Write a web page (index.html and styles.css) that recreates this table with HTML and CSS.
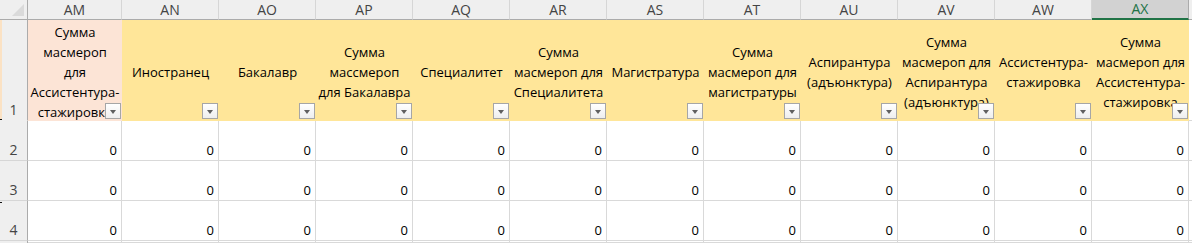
FILE: index.html
```html
<!DOCTYPE html>
<html lang="ru">
<head>
<meta charset="utf-8">
<title>Лист</title>
<link rel="stylesheet" href="styles.css">
</head>
<body>
<div class="sheet">
  <div class="corner"><svg class="corner-tri" width="12" height="12" viewBox="0 0 12 12"><polygon points="0,12 12,12 12,0" fill="#dadada"/></svg></div>
  <div class="ch">AM</div>
  <div class="ch">AN</div>
  <div class="ch">AO</div>
  <div class="ch">AP</div>
  <div class="ch">AQ</div>
  <div class="ch">AR</div>
  <div class="ch">AS</div>
  <div class="ch">AT</div>
  <div class="ch">AU</div>
  <div class="ch">AV</div>
  <div class="ch">AW</div>
  <div class="ch ch-sel">AX</div>
  <div class="ch ch-rest"></div>

  <div class="rh rh1">1</div>
  <div class="hc hc-peach"><span class="hc-text">Сумма<br>масмероп<br>для<br>Ассистентура-<br>стажировка</span><span class="dd"></span></div>
  <div class="hc"><span class="hc-text">Иностранец</span><span class="dd"></span></div>
  <div class="hc"><span class="hc-text">Бакалавр</span><span class="dd"></span></div>
  <div class="hc"><span class="hc-text">Сумма<br>массмероп<br>для Бакалавра</span><span class="dd"></span></div>
  <div class="hc"><span class="hc-text">Специалитет</span><span class="dd"></span></div>
  <div class="hc"><span class="hc-text">Сумма<br>масмероп для<br>Специалитета</span><span class="dd"></span></div>
  <div class="hc"><span class="hc-text">Магистратура</span><span class="dd"></span></div>
  <div class="hc"><span class="hc-text">Сумма<br>масмероп для<br>магистратуры</span><span class="dd"></span></div>
  <div class="hc"><span class="hc-text">Аспирантура<br>(адъюнктура)</span><span class="dd"></span></div>
  <div class="hc"><span class="hc-text">Сумма<br>масмероп для<br>Аспирантура<br>(адъюнктура)</span><span class="dd"></span></div>
  <div class="hc"><span class="hc-text">Ассистентура-<br>стажировка</span><span class="dd"></span></div>
  <div class="hc"><span class="hc-text">Сумма<br>масмероп для<br>Ассистентура-<br>стажировка</span><span class="dd"></span></div>
  <div class="dc dc-rest"></div>

  <div class="rh">2</div>
  <div class="dc">0</div><div class="dc">0</div><div class="dc">0</div><div class="dc">0</div><div class="dc">0</div><div class="dc">0</div><div class="dc">0</div><div class="dc">0</div><div class="dc">0</div><div class="dc">0</div><div class="dc">0</div><div class="dc">0</div>
  <div class="dc dc-rest"></div>

  <div class="rh">3</div>
  <div class="dc">0</div><div class="dc">0</div><div class="dc">0</div><div class="dc">0</div><div class="dc">0</div><div class="dc">0</div><div class="dc">0</div><div class="dc">0</div><div class="dc">0</div><div class="dc">0</div><div class="dc">0</div><div class="dc">0</div>
  <div class="dc dc-rest"></div>

  <div class="rh rh4">4</div>
  <div class="dc">0</div><div class="dc">0</div><div class="dc">0</div><div class="dc">0</div><div class="dc">0</div><div class="dc">0</div><div class="dc">0</div><div class="dc">0</div><div class="dc">0</div><div class="dc">0</div><div class="dc">0</div><div class="dc">0</div>
  <div class="dc dc-rest"></div>

  <div class="rh rh-tail"></div>
  <div class="dc"></div><div class="dc"></div><div class="dc"></div><div class="dc"></div><div class="dc"></div><div class="dc"></div><div class="dc"></div><div class="dc"></div><div class="dc"></div><div class="dc"></div><div class="dc"></div><div class="dc"></div>
  <div class="dc dc-rest"></div>
</div>
</body>
</html>
```

FILE: styles.css
```css
html, body {
  margin: 0;
  padding: 0;
  background: #ffffff;
  overflow: hidden;
}

body {
  font-family: "Open Sans", "Liberation Sans", sans-serif;
  font-size: 13px;
  color: #000;
}

.sheet {
  display: grid;
  grid-template-columns: 28px 94px repeat(11, 97px) 1fr;
  grid-template-rows: 20px 101px 40px 40px 40px 2px;
  width: 1192px;
  height: 243px;
  overflow: hidden;
}

.sheet > div {
  box-sizing: border-box;
}

.corner {
  background: #efefef;
  border-right: 1px solid #ababab;
  border-bottom: 1px solid #ababab;
  display: flex;
  justify-content: flex-end;
  align-items: flex-end;
  padding: 0 3px 3px 0;
}

.corner-tri {
  display: block;
}

.ch {
  background: #efefef;
  border-right: 1px solid #d6d6d6;
  border-bottom: 1px solid #ababab;
  color: #444;
  text-align: center;
  line-height: 19px;
  font-size: 14px;
}

.ch-sel {
  background: #d2d2d2;
  color: #217346;
  border-bottom: 2px solid #217346;
  line-height: 18px;
  border-right-color: #ababab;
}

.ch-rest {
  border-right: none;
}

.rh {
  background: #efefef;
  border-right: 1px solid #ababab;
  border-bottom: 1px solid #d6d6d6;
  color: #444;
  display: flex;
  justify-content: center;
  align-items: flex-end;
  padding-bottom: 1px;
  font-size: 14px;
  line-height: 18px;
}

.rh1 {
  background:
    linear-gradient(#111, #111) 0 100% / 2px 1px no-repeat,
    linear-gradient(#fbe2c4, #fbe2c4) 0 0 / 2px 100% no-repeat,
    #efefef;
  border-bottom-color: #efefef;
}

.rh4 {
  background:
    linear-gradient(#111, #111) 0 1px / 2px 1px no-repeat,
    #efefef;
}

.rh-tail {
  border-bottom: none;
}

.hc {
  background: #ffe699;
  position: relative;
  display: flex;
  align-items: center;
  justify-content: center;
  text-align: center;
  line-height: 20px;
  padding-top: 2px;
  white-space: nowrap;
  overflow: hidden;
}

.hc-peach {
  background: #fce4d6;
}

.hc-text {
  display: block;
}

.dd {
  position: absolute;
  right: 1px;
  bottom: 2px;
  width: 16px;
  height: 16px;
  box-sizing: border-box;
  border: 1px solid #a6a6a6;
  background: linear-gradient(#ffffff, #eeeeee);
}

.dd::after {
  content: "";
  position: absolute;
  left: 4px;
  top: 6px;
  border-left: 3.5px solid transparent;
  border-right: 3.5px solid transparent;
  border-top: 4px solid #5f5f5f;
}

.dc {
  border-right: 1px solid #d9d9d9;
  border-bottom: 1px solid #d9d9d9;
  display: flex;
  justify-content: flex-end;
  align-items: flex-end;
  padding: 0 4px 1px 0;
  line-height: 18px;
}

.dc-rest {
  border-right: none;
}
```
